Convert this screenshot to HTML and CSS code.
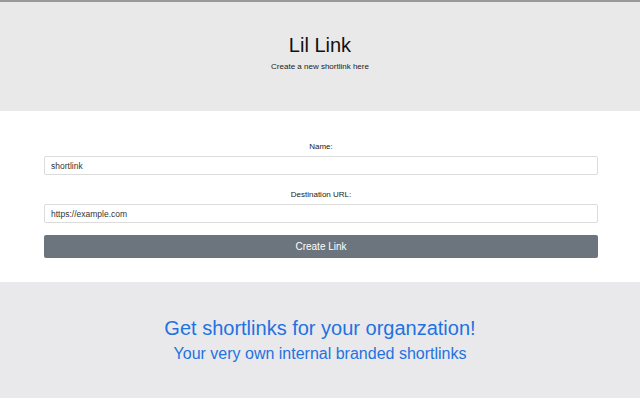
FILE: index.html
```html
<!DOCTYPE html>
<html lang="en">
<head>
    <meta charset="UTF-8">
    <meta name="viewport" content="width=device-width, initial-scale=1.0">
    <title>Lil Link</title>
    <link rel="stylesheet" href="styles.css">
</head>
<body>

    <header class="hero">
        <h1>Lil Link</h1>
        <p>Create a new shortlink here</p>
    </header>

    <form id="linkForm" class="link-form">
        <label for="name">Name:</label>
        <input type="text" id="name" name="name" value="shortlink">
        <label for="url">Destination URL:</label>
        <input type="text" id="url" name="url" value="https://example.com">
        <button type="submit">Create Link</button>
    </form>

    <section class="promo">
        <h2>Get shortlinks for your organzation!</h2>
        <h3>Your very own internal branded shortlinks</h3>
    </section>

</body>
</html>
```

FILE: styles.css
```css
body {
    font-family: "Liberation Sans", Arial, sans-serif;
    margin: 0;
    background-color: #fff;
    color: #212529;
}

.hero {
    border-top: 2px solid #9a9a9a;
    background-color: #e9e9e9;
    height: 111px;
    display: flex;
    flex-direction: column;
    align-items: center;
    padding-top: 32px;
    box-sizing: border-box;
}

.hero h1 {
    margin: 0;
    font-size: 20px;
    font-weight: normal;
    color: #111;
}

.hero p {
    margin: 5px 0 0;
    font-size: 8px;
    color: #222;
}

.link-form {
    display: flex;
    flex-direction: column;
    padding: 31px 42px 24px 44px;
    height: 171px;
    box-sizing: border-box;
}

label {
    font-size: 8px;
    text-align: center;
    margin-bottom: 5px;
    color: #222;
}

input[type="text"] {
    height: 20px;
    border: 1px solid #dcdcdc;
    border-radius: 2px;
    padding: 0 6px;
    font-family: inherit;
    font-size: 8.5px;
    color: #333;
    margin-bottom: 15px;
    box-sizing: border-box;
}

input[type="text"] + label + input[type="text"] {
    margin-bottom: 12px;
}

button {
    height: 24px;
    border: none;
    border-radius: 2px;
    background-color: #6c757d;
    color: #fff;
    font-family: inherit;
    font-size: 10px;
    cursor: pointer;
}

.promo {
    background-color: #e9e9ec;
    height: 116px;
    display: flex;
    flex-direction: column;
    align-items: center;
    padding-top: 35px;
    box-sizing: border-box;
}

.promo h2 {
    margin: 0;
    font-size: 20px;
    font-weight: normal;
    color: #1f72e0;
}

.promo h3 {
    margin: 5px 0 0;
    font-size: 16px;
    font-weight: normal;
    color: #1f72e0;
}
```
